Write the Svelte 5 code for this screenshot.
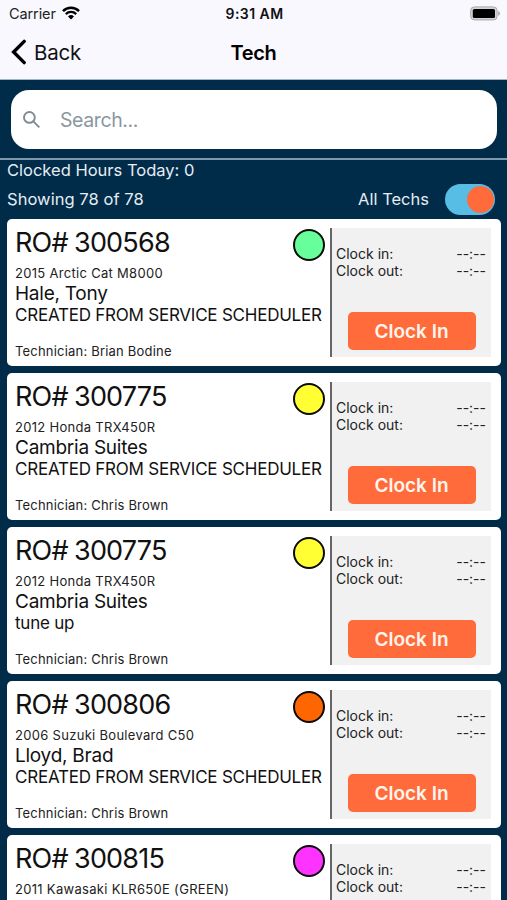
<script>
  let search = '';
  let allTechs = true;

  const orders = [
    { ro: '300568', vehicle: '2015 Arctic Cat M8000', customer: 'Hale, Tony', job: 'CREATED FROM SERVICE SCHEDULER', tech: 'Brian Bodine', status: 'green' },
    { ro: '300775', vehicle: '2012 Honda TRX450R', customer: 'Cambria Suites', job: 'CREATED FROM SERVICE SCHEDULER', tech: 'Chris Brown', status: 'yellow' },
    { ro: '300775', vehicle: '2012 Honda TRX450R', customer: 'Cambria Suites', job: 'tune up', tech: 'Chris Brown', status: 'yellow' },
    { ro: '300806', vehicle: '2006 Suzuki Boulevard C50', customer: 'Lloyd, Brad', job: 'CREATED FROM SERVICE SCHEDULER', tech: 'Chris Brown', status: 'orange' },
    { ro: '300815', vehicle: '2011 Kawasaki KLR650E (GREEN)', customer: '', job: '', tech: '', status: 'pink' }
  ];
</script>

<div class="screen">
  <header>
    <div class="status-bar">
      <div class="carrier">
        <span>Carrier</span>
        <svg width="18" height="14" viewBox="0 0 18 14">
          <path d="M1 5.1a11.4 11.4 0 0 1 16 0" fill="none" stroke="#000" stroke-width="2.5" />
          <path d="M3.8 8.1a7.4 7.4 0 0 1 10.4 0" fill="none" stroke="#000" stroke-width="2.2" />
          <path d="M9 13.5 6 10.5a4.3 4.3 0 0 1 6 0z" />
        </svg>
      </div>
      <span class="time">9:31 AM</span>
      <svg class="battery" width="31" height="15" viewBox="0 0 31 15">
        <rect x="0.7" y="0.9" width="26.4" height="13" rx="3.6" fill="#d4d4d6" stroke="#a9a9ac" stroke-width="1" />
        <rect x="2.8" y="3" width="22.2" height="9" rx="1.5" />
        <path d="M28.2 5c2.4.8 2.4 4 0 4.8z" fill="#a9a9ac" />
      </svg>
    </div>
    <div class="nav-bar">
      <button class="back">
        <svg width="16" height="26" viewBox="0 0 16 26">
          <path d="M13.2 2.4 2.6 13l10.6 10.6" fill="none" stroke="#000" stroke-width="3.4" stroke-linecap="round" />
        </svg>
        <span>Back</span>
      </button>
      <h1>Tech</h1>
    </div>
  </header>

  <div class="search-area">
    <label class="search">
      <svg width="18" height="18" viewBox="0 0 18 18" fill="none" stroke="#7e8c96" stroke-width="1.9">
        <circle cx="6.4" cy="6.4" r="5.4" />
        <path d="m10.4 10.4 5.9 5.9" />
      </svg>
      <input type="text" placeholder="Search..." bind:value={search} />
    </label>
  </div>

  <div class="summary">
    <div class="hours">Clocked Hours Today: 0</div>
    <div class="filter">
      <span class="showing">Showing 78 of 78</span>
      <span class="all-techs">All Techs</span>
      <button class="toggle" class:on={allTechs} aria-label="All Techs" on:click={() => (allTechs = !allTechs)}>
        <span class="knob"></span>
      </button>
    </div>
  </div>

  <div class="list">
    {#each orders as order}
      <div class="card">
        <div class="details">
          <div class="heading">
            <span class="ro">RO# {order.ro}</span>
            <span class="dot {order.status}"></span>
          </div>
          <div class="vehicle">{order.vehicle}</div>
          <div class="customer">{order.customer}</div>
          <div class="job">{order.job}</div>
          {#if order.tech}
            <div class="tech">Technician: {order.tech}</div>
          {/if}
        </div>
        <div class="clock">
          <div class="row"><span>Clock in:</span><span class="value">--:--</span></div>
          <div class="row"><span>Clock out:</span><span class="value">--:--</span></div>
          <button class="clock-in">Clock In</button>
        </div>
      </div>
    {/each}
  </div>
</div>

<style>
  :global(body) {
    margin: 0;
    overflow: hidden;
  }

  .screen {
    height: 900px;
    overflow: hidden;
    display: flex;
    flex-direction: column;
    background: #002b49;
    color: #111;
    font-family: Inter, sans-serif;
    white-space: nowrap;
  }

  button {
    border: 0;
    padding: 0;
    background: none;
    color: inherit;
    font: inherit;
  }

  header {
    height: 80px;
    box-sizing: border-box;
    flex-shrink: 0;
    background: #f8f8fe;
    border-bottom: 1px solid #a5b3c2;
  }

  .status-bar {
    display: grid;
    grid-template-columns: 1fr auto 1fr;
    align-items: center;
    height: 27px;
    padding: 0 7px 0 9px;
  }

  .carrier {
    display: flex;
    align-items: center;
    gap: 6px;
    font-size: 14.5px;
    letter-spacing: -0.1px;
    color: #222;
  }

  .carrier svg {
    margin-top: -2px;
  }

  .time {
    font-size: 14px;
    font-weight: 600;
    letter-spacing: 0.45px;
  }

  .battery {
    justify-self: end;
    margin-right: -1px;
    margin-top: -1px;
  }

  .nav-bar {
    display: grid;
    grid-template-columns: 1fr auto 1fr;
    align-items: center;
    height: 50px;
    padding: 0 11px;
  }

  .back {
    display: flex;
    align-items: center;
    gap: 7px;
    font-size: 20.5px;
    letter-spacing: -0.2px;
  }

  h1 {
    margin: 1px 0 0;
    font-size: 20px;
    font-weight: 600;
    letter-spacing: -0.4px;
    color: #000;
  }

  .search-area {
    height: 80px;
    box-sizing: border-box;
    flex-shrink: 0;
    padding: 10px 10px 0 11px;
    border-bottom: 2px solid #7f98ab;
  }

  .search {
    display: flex;
    align-items: center;
    gap: 19px;
    height: 59px;
    box-sizing: border-box;
    padding: 0 12px;
    background: #fff;
    border-radius: 18px;
  }

  .search svg {
    flex-shrink: 0;
  }

  .search input {
    flex: 1;
    min-width: 0;
    padding: 0;
    border: 0;
    outline: none;
    background: none;
    font: 19.5px Inter, sans-serif;
    letter-spacing: -0.4px;
  }

  .search input::placeholder {
    color: #8a979f;
    opacity: 1;
  }

  .summary {
    height: 59px;
    flex-shrink: 0;
    color: #e6edf3;
    font-size: 16.5px;
  }

  .hours {
    padding-left: 7px;
    line-height: 21px;
  }

  .filter {
    display: flex;
    align-items: center;
    height: 36px;
    padding: 0 12px 0 7px;
  }

  .showing {
    letter-spacing: 0.05px;
  }

  .all-techs {
    margin-left: auto;
    margin-right: 16px;
  }

  .toggle {
    display: flex;
    align-items: center;
    width: 50px;
    height: 31px;
    box-sizing: border-box;
    padding: 0 2px;
    border-radius: 16px;
    background: #8a979f;
  }

  .toggle.on {
    justify-content: flex-end;
    padding-right: 1px;
    background: #57bde5;
  }

  .knob {
    width: 27px;
    height: 27px;
    border-radius: 50%;
    background: #ff6b3a;
  }

  .list {
    display: flex;
    flex-direction: column;
    gap: 7px;
    padding: 0 6px 0 7px;
  }

  .card {
    display: flex;
    height: 147px;
    box-sizing: border-box;
    flex-shrink: 0;
    padding: 9px 10px 9px 8px;
    background: #fff;
    border-radius: 5px;
  }

  .details {
    flex: 1;
    min-width: 0;
    margin-top: -3px;
  }

  .heading {
    display: flex;
    justify-content: space-between;
    height: 32px;
    margin-bottom: 7px;
    padding-right: 5px;
  }

  .ro {
    font-size: 27px;
    line-height: 35px;
    letter-spacing: -0.8px;
    word-spacing: -0.5px;
  }

  .dot {
    width: 32px;
    height: 32px;
    box-sizing: border-box;
    margin-top: 4px;
    border: 2.5px solid #0b0b0b;
    border-radius: 50%;
  }

  .green {
    background: #66ff99;
  }

  .yellow {
    background: #ffff33;
  }

  .orange {
    background: #ff6600;
  }

  .pink {
    background: #ff33ff;
  }

  .vehicle,
  .tech {
    font-size: 13px;
    line-height: 18px;
    letter-spacing: 0.3px;
    color: #222;
  }

  .tech {
    letter-spacing: 0.2px;
  }

  .customer {
    height: 22px;
    font-size: 19px;
    line-height: 24px;
    letter-spacing: -0.25px;
  }

  .job {
    height: 22px;
    margin-bottom: 16px;
    font-size: 17px;
    line-height: 22px;
    letter-spacing: -0.23px;
  }

  .clock {
    display: flex;
    flex-direction: column;
    width: 161px;
    box-sizing: border-box;
    padding: 17px 5px 7px 4px;
    border-left: 2px solid #666;
    background: #f1f1f1;
  }

  .row {
    display: flex;
    justify-content: space-between;
    font-size: 14px;
    line-height: 17px;
    color: #222;
  }

  .clock-in {
    width: 128px;
    height: 38px;
    margin: auto auto 0 11.5px;
    border-radius: 5px;
    background: #ff6b3a;
    color: #fff5ee;
    font-size: 19px;
    font-weight: 600;
  }
</style>
